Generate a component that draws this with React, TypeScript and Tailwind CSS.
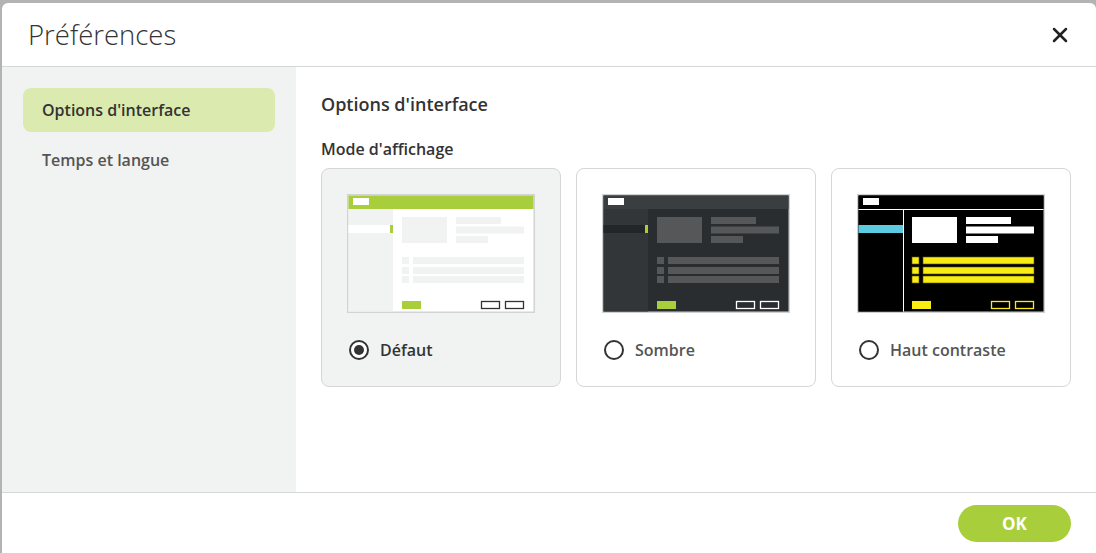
import { X } from 'lucide-react';

type Theme = 'default' | 'dark' | 'contrast';

interface Palette {
  frame: string;
  bar: string;
  side: string;
  body: string;
  active: string;
  marker: string;
  block: string;
  rows: string;
  rowStroke?: string;
  button: string;
  outline: string;
  outlineFill: string;
  divider?: string;
}

const palettes: Record<Theme, Palette> = {
  default: {
    frame: '#d2d3d3',
    bar: '#a8cf3b',
    side: '#f1f2f2',
    body: '#ffffff',
    active: '#ffffff',
    marker: '#a8cf3b',
    block: '#f1f2f2',
    rows: '#f1f2f2',
    button: '#a8cf3b',
    outline: '#333333',
    outlineFill: '#ffffff',
  },
  dark: {
    frame: '#cfd0d0',
    bar: '#3b3e41',
    side: '#333639',
    body: '#2a2d30',
    active: '#232629',
    marker: '#a8cf3b',
    block: '#555759',
    rows: '#555759',
    button: '#a8cf3b',
    outline: '#ffffff',
    outlineFill: '#2a2d30',
  },
  contrast: {
    frame: '#cfd0d0',
    bar: '#000000',
    side: '#000000',
    body: '#000000',
    active: '#5ccbe2',
    marker: '#5ccbe2',
    block: '#ffffff',
    rows: '#f8ec13',
    rowStroke: '#5b5500',
    button: '#f8ec13',
    outline: '#f8ec13',
    outlineFill: '#000000',
    divider: '#ffffff',
  },
};

function Preview({ theme }: { theme: Theme }) {
  const p = palettes[theme];
  return (
    <svg width="188" height="119" viewBox="0 0 188 119" className="block">
      <rect x="0" y="0" width="188" height="119" fill={p.frame} />
      <rect x="1.5" y="1.5" width="185" height="116" fill={p.body} />
      {/* top bar */}
      <rect x="1.5" y="1.5" width="185" height="13.5" fill={p.bar} />
      <rect x="6" y="4" width="16" height="7" fill="#ffffff" />
      {/* sidebar */}
      <rect x="1.5" y="15" width="44.5" height="102.5" fill={p.side} />
      <rect x="1.5" y="31" width="41.5" height="8" fill={p.active} />
      <rect x="43" y="31" width="3" height="8" fill={p.marker} />
      {p.divider && (
        <>
          <rect x="1.5" y="15" width="185" height="1" fill={p.divider} />
          <rect x="46" y="15" width="1" height="102.5" fill={p.divider} />
        </>
      )}
      {/* content */}
      <rect x="55" y="23" width="45" height="26" fill={p.block} />
      <rect x="109" y="23" width="45" height="7" fill={p.block} />
      <rect x="109" y="32.5" width="68" height="7" fill={p.block} />
      <rect x="109" y="42" width="32" height="7" fill={p.block} />
      {[63, 73, 82].map((y) => (
        <g key={y}>
          <rect x="55" y={y} width="7" height="7" fill={p.rows} stroke={p.rowStroke} strokeWidth={p.rowStroke ? 0.6 : 0} />
          <rect x="66" y={y} width="111" height="7" fill={p.rows} stroke={p.rowStroke} strokeWidth={p.rowStroke ? 0.6 : 0} />
        </g>
      ))}
      <rect x="55" y="107" width="19" height="8" fill={p.button} />
      <rect x="134.5" y="107.5" width="18" height="7" fill={p.outlineFill} stroke={p.outline} strokeWidth="1.3" />
      <rect x="158.5" y="107.5" width="18" height="7" fill={p.outlineFill} stroke={p.outline} strokeWidth="1.3" />
    </svg>
  );
}

const modes: { id: Theme; label: string }[] = [
  { id: 'default', label: 'Défaut' },
  { id: 'dark', label: 'Sombre' },
  { id: 'contrast', label: 'Haut contraste' },
];

export default function App() {
  const selected: Theme = 'default';
  const font = { fontFamily: '"Open Sans", "Noto Sans", sans-serif' };

  return (
    <div className="h-[553px] w-full overflow-hidden bg-[#b3b3b3] pl-[2px] pt-[3px]" style={font}>
      <div className="flex h-[600px] w-[1094px] flex-col rounded-t-[6px] bg-white">
        {/* Header */}
        <div className="flex h-[64px] shrink-0 items-center justify-between border-b border-[#d6d6d6] pl-[26px] pr-[24px]">
          <h1 className="text-[27.5px] font-light leading-[36px] text-[#333333]">Préférences</h1>
          <button className="flex h-6 w-6 items-center justify-center text-[#222222]">
            <X size={24} strokeWidth={2.5} />
          </button>
        </div>

        {/* Body */}
        <div className="flex h-[425px] shrink-0">
          <nav className="flex w-[294px] shrink-0 flex-col gap-[6px] bg-[#f1f2f2] px-[21px] pt-[21px]">
            <div className="flex h-[44px] items-center rounded-[8px] bg-[#dbebb0] px-[19px] text-[16px] font-semibold text-[#333333]">
              Options d'interface
            </div>
            <div className="flex h-[44px] items-center px-[19px] text-[16px] font-semibold text-[#555555]">
              Temps et langue
            </div>
          </nav>

          <section className="flex-1 pl-[25px] pt-[25px]">
            <h2 className="text-[18px] font-semibold leading-[24px] text-[#333333]">Options d'interface</h2>
            <div className="mt-[22px] text-[16px] font-semibold leading-[22px] text-[#333333]">Mode d'affichage</div>
            <div className="mt-[8px] flex gap-[15px]">
              {modes.map((m) => {
                const active = m.id === selected;
                return (
                  <div
                    key={m.id}
                    className={`flex h-[219px] w-[240px] flex-col items-center rounded-[8px] border border-[#d6d6d6] pt-[25px] ${
                      active ? 'bg-[#f1f2f2]' : 'bg-white'
                    }`}
                  >
                    <Preview theme={m.id} />
                    <div className="mt-[25px] flex w-full items-center gap-[11px] pl-[27px]">
                      <span className="flex h-[20px] w-[20px] items-center justify-center rounded-full border-2 border-[#333333] bg-white">
                        {active && <span className="h-[10px] w-[10px] rounded-full bg-[#333333]" />}
                      </span>
                      <span className={`text-[16px] font-semibold ${active ? 'text-[#333333]' : 'text-[#555555]'}`}>
                        {m.label}
                      </span>
                    </div>
                  </div>
                );
              })}
            </div>
          </section>
        </div>

        {/* Footer */}
        <div className="flex flex-1 justify-end border-t border-[#d6d6d6] pr-[25px] pt-[12px]">
          <button className="h-[37px] w-[113px] rounded-full bg-[#a8cf3b] text-[17px] font-bold text-white">OK</button>
        </div>
      </div>
    </div>
  );
}
